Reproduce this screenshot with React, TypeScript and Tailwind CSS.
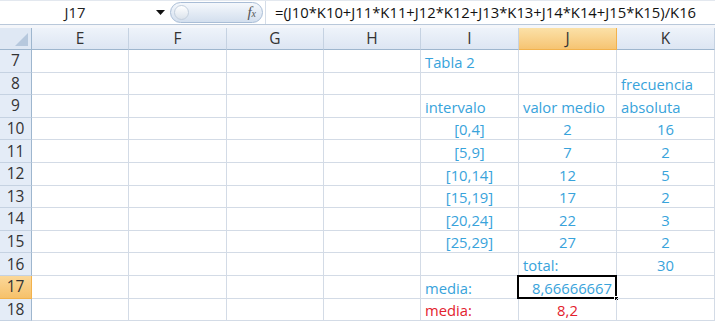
import React from 'react';

type Align = 'left' | 'center' | 'right';
type Cell = { text: string; align: Align; red?: boolean };

const columns = ['E', 'F', 'G', 'H', 'I', 'J', 'K'];
const rowNumbers = [7, 8, 9, 10, 11, 12, 13, 14, 15, 16, 17, 18];

const cells: Record<string, Cell> = {
  I7: { text: 'Tabla 2', align: 'left' },
  K8: { text: 'frecuencia', align: 'left' },
  I9: { text: 'intervalo', align: 'left' },
  J9: { text: 'valor medio', align: 'left' },
  K9: { text: 'absoluta', align: 'left' },
  I10: { text: '[0,4]', align: 'center' },
  J10: { text: '2', align: 'center' },
  K10: { text: '16', align: 'center' },
  I11: { text: '[5,9]', align: 'center' },
  J11: { text: '7', align: 'center' },
  K11: { text: '2', align: 'center' },
  I12: { text: '[10,14]', align: 'center' },
  J12: { text: '12', align: 'center' },
  K12: { text: '5', align: 'center' },
  I13: { text: '[15,19]', align: 'center' },
  J13: { text: '17', align: 'center' },
  K13: { text: '2', align: 'center' },
  I14: { text: '[20,24]', align: 'center' },
  J14: { text: '22', align: 'center' },
  K14: { text: '3', align: 'center' },
  I15: { text: '[25,29]', align: 'center' },
  J15: { text: '27', align: 'center' },
  K15: { text: '2', align: 'center' },
  J16: { text: 'total:', align: 'left' },
  K16: { text: '30', align: 'center' },
  I17: { text: 'media:', align: 'left' },
  J17: { text: '8,66666667', align: 'right' },
  I18: { text: 'media:', align: 'left', red: true },
  J18: { text: '8,2', align: 'center', red: true },
};

const alignClass: Record<Align, string> = {
  left: 'justify-start pl-[4px]',
  center: 'justify-center',
  right: 'justify-end pr-[4px]',
};

export default function App() {
  return (
    <div
      className="h-[325px] w-[715px] overflow-hidden bg-white text-[14.8px]"
      style={{ fontFamily: '"Open Sans", "Liberation Sans", sans-serif' }}
    >
      <FormulaBar />
      <div className="h-[3px] bg-[#f4f6fa]" />
      <div className="grid grid-cols-[32px_97px_98px_97px_97px_98px_98px_98px] grid-rows-[22px_repeat(12,22.6px)]">
        <div className="relative border-b border-r border-[#9eb6ce] bg-[#dfe8f4]">
          <div className="absolute bottom-[3px] right-[3px] h-0 w-0 border-b-[13px] border-l-[13px] border-b-[#b6c8dd] border-l-transparent" />
        </div>
        {columns.map((col) => (
          <div
            key={col}
            className={
              col === 'J'
                ? 'flex items-center justify-center border-b border-r border-[#f2b24d] bg-gradient-to-b from-[#fbe1a8] to-[#f6c472] text-[15.5px] text-[#333]'
                : 'flex items-center justify-center border-b border-r border-b-[#9eb6ce] border-r-[#c5d2e2] bg-gradient-to-b from-[#eef3fa] to-[#dde6f3] text-[15.5px] text-[#333]'
            }
          >
            {col}
          </div>
        ))}
        {rowNumbers.map((row) => (
          <React.Fragment key={row}>
            <div
              className={
                row === 17
                  ? 'flex items-center justify-center border-b border-r border-[#f2b24d] bg-gradient-to-b from-[#fbd899] to-[#f6c16a] text-[15.5px] text-[#333]'
                  : 'flex items-center justify-center border-b border-r border-b-[#c5d2e2] border-r-[#9eb6ce] bg-[#e4ecf7] text-[15.5px] text-[#333]'
              }
            >
              {row}
            </div>
            {columns.map((col) => (
              <GridCell key={col} id={`${col}${row}`} cell={cells[`${col}${row}`]} />
            ))}
          </React.Fragment>
        ))}
      </div>
    </div>
  );
}

function GridCell({ id, cell }: { id: string; cell?: Cell }) {
  const selected = id === 'J17';

  return (
    <div className="relative flex items-end border-b border-r border-[#d3dbe6]">
      {cell ? (
        <div
          className={`flex h-[20px] w-full items-center leading-[20px] ${alignClass[cell.align]} ${
            cell.red ? 'text-[#e3212d]' : 'text-[#38a3db]'
          }`}
        >
          {cell.text}
        </div>
      ) : null}
      {selected ? (
        <>
          <div className="absolute -left-[2px] -top-[1px] bottom-[-1px] right-[-1px] border-2 border-black" />
          <div className="absolute -bottom-[3px] -right-[3px] h-[5px] w-[5px] border border-white bg-black" />
        </>
      ) : null}
    </div>
  );
}

function FormulaBar() {
  return (
    <div className="flex h-[25px] border-b border-t border-b-[#b9c8da] border-t-[#e3e8ef] bg-white">
      <div className="flex w-[150px] items-center justify-center text-[#222]">J17</div>
      <div className="flex w-[20px] items-center justify-center">
        <svg width="9" height="5" viewBox="0 0 9 5">
          <path d="M0 0h9L4.5 5z" fill="#111" />
        </svg>
      </div>
      <div className="my-[1px] flex w-[93px] items-center justify-between rounded-full border border-[#a9bdd6] bg-gradient-to-b from-[#f5f8fc] to-[#d3dfee] pl-[3px] pr-[6px]">
        <div className="h-[15px] w-[15px] rounded-full border border-[#c3cfdd] bg-gradient-to-b from-white to-[#dbe3ec]" />
        <span
          className="text-[15px] italic text-[#555]"
          style={{ fontFamily: '"Liberation Serif", serif' }}
        >
          f<span className="text-[10px]">x</span>
        </span>
      </div>
      <div className="ml-[2px] flex flex-1 items-center border-l border-[#d5dde8] pl-[9px] text-[#111]">
        =(J10*K10+J11*K11+J12*K12+J13*K13+J14*K14+J15*K15)/K16
      </div>
    </div>
  );
}
